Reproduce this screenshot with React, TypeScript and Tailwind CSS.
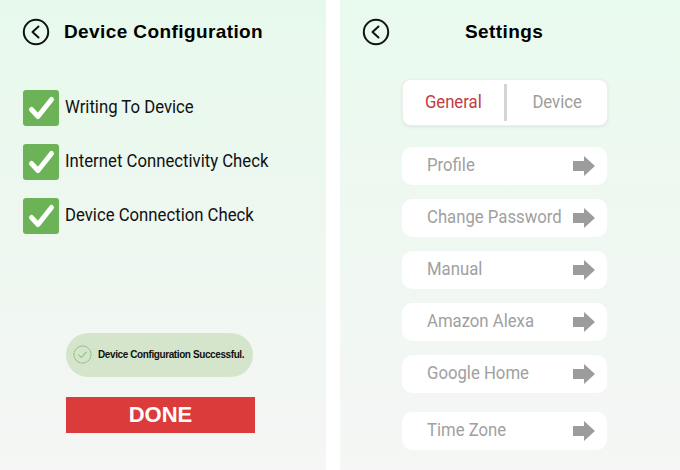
import React from "react";

const checks = ["Writing To Device", "Internet Connectivity Check", "Device Connection Check"];
const rows = ["Profile", "Change Password", "Manual", "Amazon Alexa", "Google Home", "Time Zone"];

// condensed look: Roboto squeezed horizontally
const narrow = "inline-block whitespace-nowrap font-['Roboto',sans-serif] scale-x-[0.88]";

function BackIcon() {
  return (
    <svg width="28" height="28" viewBox="0 0 28 28" fill="none">
      <circle cx="14" cy="14" r="12.2" stroke="#111" strokeWidth="2" />
      <path d="M16.5 8.5 L10.5 14 L16.5 19.5" stroke="#111" strokeWidth="2" strokeLinecap="round" strokeLinejoin="round" />
    </svg>
  );
}

function CheckBox() {
  return (
    <div className="w-9 h-9 rounded-[3px] bg-[#6bb356] flex items-center justify-center shrink-0">
      <svg width="36" height="36" viewBox="0 0 36 36" fill="none">
        <path d="M8.5 19.5 L15 26.5 L28.5 9.5" stroke="#fff" strokeWidth="5" strokeLinecap="round" strokeLinejoin="round" />
      </svg>
    </div>
  );
}

function Arrow() {
  return (
    <svg width="22" height="20" viewBox="0 0 22 20" className="shrink-0">
      <path d="M0 5 H11 V0 L22 10 L11 20 V15 H0 Z" fill="#9c9c9c" />
    </svg>
  );
}

export default function App() {
  return (
    <div className="w-[680px] h-[470px] flex bg-white overflow-hidden font-['Liberation_Sans',Arial,sans-serif]">
      {/* device configuration */}
      <div className="w-[326px] h-full bg-gradient-to-b from-[#e7f9ec] to-[#f5f6f5] flex flex-col">
        <div className="flex items-center pl-[22px] pt-[18px] gap-[14px]">
          <BackIcon />
          <h1 className="text-[19px] font-bold text-black tracking-[0.4px]">Device Configuration</h1>
        </div>
        <div className="flex flex-col gap-[18px] pl-[23px] mt-[43px]">
          {checks.map((c) => (
            <div key={c} className="flex items-center gap-[6px]">
              <CheckBox />
              <span className={`${narrow} origin-left text-[19px] text-[#111]`}>{c}</span>
            </div>
          ))}
        </div>
        <div className="ml-[66px] mt-[99px] w-[187px] h-[44px] rounded-full bg-[#d4e5cb] flex items-center pl-[7px] gap-[6px]">
          <svg width="19" height="19" viewBox="0 0 19 19" fill="none">
            <circle cx="9.5" cy="9.5" r="8.5" stroke="#6aa85a" strokeWidth="0.8" strokeDasharray="2 0.6" />
            <path d="M5.5 9.8 L8.3 12.5 L13.5 6.8" stroke="#6aa85a" strokeWidth="0.9" fill="none" />
          </svg>
          <span className="text-[10px] font-bold text-[#111] tracking-[-0.4px]">Device Configuration Successful.</span>
        </div>
        <button className="ml-[66px] mt-[20px] w-[189px] h-[36px] bg-[#dc3b3b] text-white text-[22px] font-bold flex items-center justify-center">
          DONE
        </button>
      </div>

      {/* settings */}
      <div className="w-[340px] h-full ml-[14px] bg-gradient-to-b from-[#e9faee] to-[#f5f6f5] flex flex-col">
        <div className="flex items-center pl-[22px] pt-[18px]">
          <BackIcon />
          <h1 className="text-[19px] font-bold text-black tracking-[0.4px] ml-[75px]">Settings</h1>
        </div>
        <div className="ml-[63px] mt-[33px] w-[204px] h-[45px] rounded-[8px] bg-white shadow-[0_1px_4px_rgba(0,0,0,0.12)] ring-1 ring-[#eeeeee] flex items-center">
          <div className="flex-1 text-center">
            <span className={`${narrow} text-[19px] text-[#c13c3f]`}>General</span>
          </div>
          <div className="w-[3px] h-[37px] bg-[#d4d4d4]" />
          <div className="flex-1 text-center">
            <span className={`${narrow} text-[19px] text-[#9d9d9d]`}>Device</span>
          </div>
        </div>
        <div className="flex flex-col gap-[14px] ml-[62px] mt-[22px] w-[205px]">
          {rows.map((r, i) => (
            <div
              key={r}
              className={`h-[38px] rounded-[10px] bg-white flex items-center pl-[25px] pr-[12px] ${i === 5 ? "mt-[5px]" : ""}`}
            >
              <div className="flex-1 min-w-0">
                <span className={`${narrow} origin-left text-[19px] text-[#a0a0a0]`}>{r}</span>
              </div>
              <Arrow />
            </div>
          ))}
        </div>
      </div>
    </div>
  );
}
